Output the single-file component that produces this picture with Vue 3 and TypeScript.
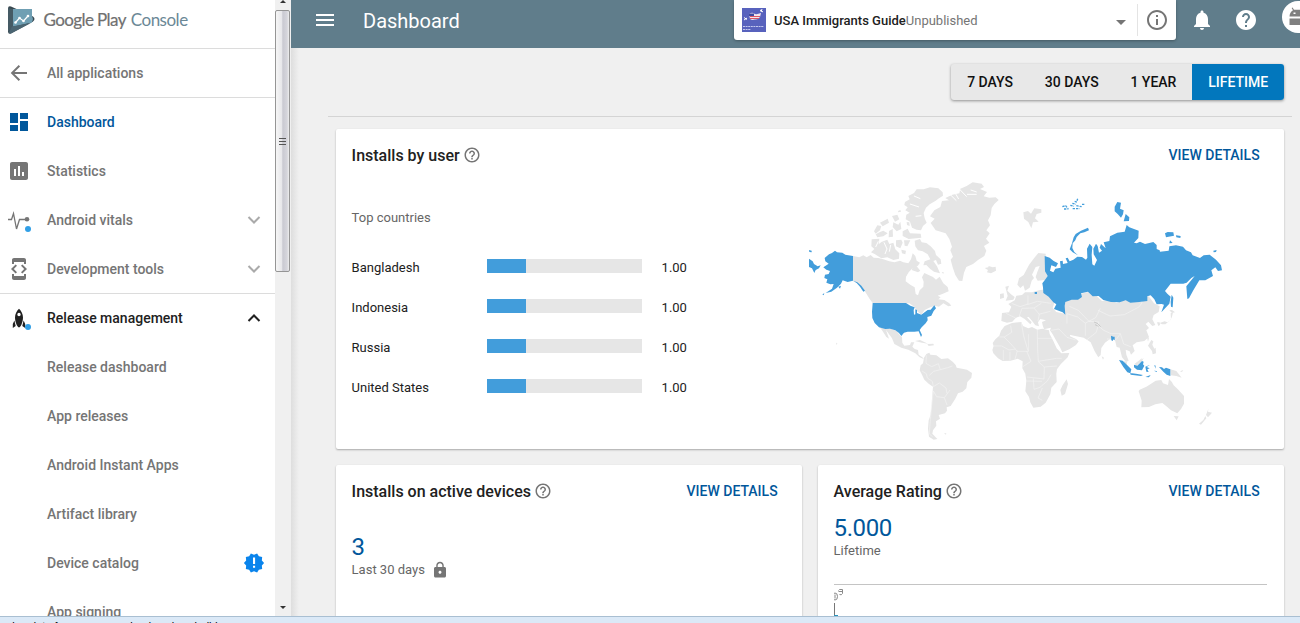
<script setup lang="ts">
interface NavItem {
  label: string
  icon?: string
  state?: 'active' | 'open'
  chevron?: 'up' | 'down'
  dot?: boolean
  badge?: boolean
  line?: boolean
}

const nav: NavItem[] = [
  { label: 'All applications', icon: 'back', line: true },
  { label: 'Dashboard', icon: 'dashboard', state: 'active' },
  { label: 'Statistics', icon: 'stats' },
  { label: 'Android vitals', icon: 'vitals', chevron: 'down', dot: true },
  { label: 'Development tools', icon: 'dev', chevron: 'down', line: true },
  { label: 'Release management', icon: 'rocket', state: 'open', chevron: 'up', dot: true },
  { label: 'Release dashboard' },
  { label: 'App releases' },
  { label: 'Android Instant Apps' },
  { label: 'Artifact library' },
  { label: 'Device catalog', badge: true },
  { label: 'App signing' },
]

const icons: Record<string, string> = {
  back: 'M20 11.1H7.5l5.6-5.6L11.7 4l-8 8 8 8 1.4-1.4-5.6-5.6H20z',
  dashboard: 'M3 13h8V3H3v10zm0 8h8v-6H3v6zm10 0h8V11h-8v10zm0-18v6h8V3h-8z',
  stats: 'M19 3H5c-1.1 0-2 .9-2 2v14c0 1.1.9 2 2 2h14c1.1 0 2-.9 2-2V5c0-1.1-.9-2-2-2zM9 17H7v-7h2v7zm4 0h-2V7h2v10zm4 0h-2v-4h2v4z',
  dev: 'M7 5h10v2h2V3c0-1.1-.9-2-2-2H7c-1.1 0-2 .9-2 2v4h2V5zm8.4 11.6L20 12l-4.6-4.6L14 8.8l3.2 3.2-3.2 3.2 1.4 1.4zM10 15.2L6.8 12 10 8.8 8.6 7.4 4 12l4.6 4.6 1.4-1.4zM17 19H7v-2H5v4c0 1.1.9 2 2 2h10c1.1 0 2-.9 2-2v-4h-2v2z',
  rocket: 'M12 2.8c-2.4 2.3-4 5.200-4 8.700 0 2.500.6 4.900 1.700 7.500l1.500 2.200h1.600l1.500-2.200c1.100-2.600 1.700-5 1.700-7.500 0-3.500-1.600-6.400-4-8.700zM12 6.800a1.700 1.700 0 1 1 0 3.400 1.700 1.700 0 0 1 0-3.400zM7.400 14.500L5.800 18v4l2.900-2.100zM16.600 14.500l1.600 3.500v4l-2.900-2.100z',
}

const help = 'M11 18h2v-2h-2v2zm1-16C6.480 2 2 6.480 2 12s4.480 10 10 10 10-4.480 10-10S17.520 2 12 2zm0 18c-4.410 0-8-3.590-8-8s3.590-8 8-8 8 3.590 8 8-3.590 8-8 8zm0-14c-2.210 0-4 1.790-4 4h2c0-1.100.9-2 2-2s2 .9 2 2c0 2-3 1.750-3 5h2c0-2.250 3-2.500 3-5 0-2.210-1.790-4-4-4z'

const ranges = ['7 DAYS', '30 DAYS', '1 YEAR', 'LIFETIME']
const selected = 'LIFETIME'

const countries = [
  { name: 'Bangladesh', value: 1 },
  { name: 'Indonesia', value: 1 },
  { name: 'Russia', value: 1 },
  { name: 'United States', value: 1 },
]
const total = countries.reduce((sum, c) => sum + c.value, 0)
</script>

<template>
  <div class="page">
    <div class="frame">
      <aside class="sidebar">
        <div class="brand">
          <svg width="28" height="30" viewBox="0 0 28 30">
            <path d="M1 3.500Q1 .5 4 1.500L26 11.500Q29 14 26 16.500L4 28.500Q1 29.500 1 26.500z" fill="#37474f" />
            <path d="M4.500 4H25v7l1 3-1 3.500L4.500 22z" fill="#6f9fb3" />
            <path d="M1 3v24L6 22V4z" fill="#455a64" />
            <path d="M5 21.500L24 18 4 28.500Q2 29 2 27z" fill="#4b6572" />
            <path d="M8.500 17.500l4-4.500 4 3 4.500-5" fill="none" stroke="#fff" stroke-width="1.200" />
            <g fill="#fff"><circle cx="8.500" cy="17.500" r="1.300" /><circle cx="12.500" cy="13" r="1.300" /><circle cx="16.500" cy="16" r="1.300" /><circle cx="21" cy="11" r="1.300" /></g>
          </svg>
          <span class="brand-name">Google Play</span>
          <span class="brand-sub">Console</span>
        </div>
        <nav>
          <div v-for="item in nav" :key="item.label" class="nav-item" :class="[item.state, { line: item.line }]">
            <span class="nav-icon">
              <svg v-if="item.icon === 'vitals'" width="24" height="24" viewBox="0 0 24 24">
                <path d="M1 11.500h3.500l2-6 3 15.500 3-9.500H19" fill="none" stroke="currentColor" stroke-width="1.300" />
                <circle cx="20" cy="11.300" r="2.300" fill="currentColor" />
              </svg>
              <svg v-else-if="item.icon" width="24" height="24" viewBox="0 0 24 24">
                <path :d="icons[item.icon]" fill="currentColor" fill-rule="evenodd" />
              </svg>
              <i v-if="item.dot" class="dot"></i>
            </span>
            <span class="nav-label">{{ item.label }}</span>
            <svg v-if="item.chevron" class="chevron" width="14" height="8" viewBox="0 0 14 8">
              <path :d="item.chevron === 'up' ? 'M1.500 7L7 1.500 12.500 7' : 'M1.500 1L7 6.500 12.500 1'" fill="none" stroke="currentColor" stroke-width="2" />
            </svg>
            <svg v-if="item.badge" class="badge" width="22" height="22" viewBox="0 0 24 24">
              <path fill="#0a84ec" d="M23 12l-2.440-2.780.34-3.680-3.610-.82-1.890-3.180L12 3 8.600 1.540 6.710 4.720l-3.610.81.34 3.680L1 12l2.440 2.780-.34 3.690 3.610.82 1.890 3.180L12 21l3.400 1.460 1.890-3.180 3.610-.82-.34-3.680z" />
              <path fill="#fff" d="M10.900 6h2.300v7h-2.300zM10.900 15h2.300v2.300h-2.300z" />
            </svg>
          </div>
        </nav>
      </aside>

      <div class="scrollbar">
        <div class="scroll-end"><i class="tri up"></i></div>
        <div class="thumb"><i></i><i></i><i></i></div>
        <div class="scroll-end bottom"><i class="tri down"></i></div>
      </div>

      <div class="main">
        <header class="topbar">
          <svg class="menu" width="18" height="12" viewBox="0 0 18 12"><path fill="#fff" d="M0 0h18v2H0zM0 5h18v2H0zM0 10h18v2H0z" /></svg>
          <h1>Dashboard</h1>
          <div class="app-picker">
            <svg width="24" height="24" viewBox="0 0 24 24">
              <path fill="#5862bd" d="M0 0h24v24H0z" />
              <path fill="#f4e8ee" d="M7 6q3-2 5-.5t7-.5l-1 4q-2 3-5 2.500-3 1-5-.5z" />
              <path stroke="#dc5867" d="M8 8.500h10M8 10.500h9" />
              <path fill="#3e4aa0" d="M7 5.500h5v2.500H7z" />
              <path stroke="#fff" d="M2 9.500l3 2M2 12l3-2M18 2l3 2M19 4l1-3" />
              <path stroke="#c3c7ee" stroke-dasharray="2 .6" d="M1 18.500h21M1 21.500h8" />
            </svg>
            <span class="app-name">USA Immigrants Guide</span><span class="app-state">Unpublished</span>
            <svg class="caret" width="10" height="5" viewBox="0 0 10 5"><path fill="#757575" d="M0 0h10L5 5z" /></svg>
            <span class="picker-info">
              <svg width="24" height="24" viewBox="0 0 24 24"><path fill="#757575" d="M11 17h2v-6h-2v6zm1-15C6.480 2 2 6.480 2 12s4.480 10 10 10 10-4.480 10-10S17.520 2 12 2zm0 18c-4.410 0-8-3.590-8-8s3.590-8 8-8 8 3.590 8 8-3.590 8-8 8zM11 9h2V7h-2v2z" /></svg>
            </span>
          </div>
          <svg class="bell" width="24" height="24" viewBox="0 0 24 24"><path fill="#fff" d="M12 22c1.100 0 2-.9 2-2h-4c0 1.100.89 2 2 2zm6-6v-5c0-3.070-1.640-5.640-4.500-6.320V4c0-.83-.67-1.500-1.500-1.500s-1.500.67-1.500 1.500v.68C7.630 5.360 6 7.920 6 11v5l-2 2v1h16v-1l-2-2z" /></svg>
          <svg class="support" width="24" height="24" viewBox="0 0 24 24"><path fill="#fff" d="M12 2C6.480 2 2 6.480 2 12s4.480 10 10 10 10-4.480 10-10S17.520 2 12 2zm1 17h-2v-2h2v2zm2.070-7.750l-.9.920C13.450 12.900 13 13.500 13 15h-2v-.5c0-1.100.45-2.100 1.170-2.830l1.240-1.260c.37-.36.59-.86.59-1.410 0-1.100-.9-2-2-2s-2 .9-2 2H8c0-2.210 1.790-4 4-4s4 1.790 4 4c0 .88-.36 1.680-.93 2.250z" /></svg>
          <svg class="avatar" width="32" height="32" viewBox="0 0 32 32">
            <circle cx="16" cy="16" r="16" fill="#fff" />
            <path fill="#808080" d="M7.500 15.500c0-3 1.500-5.200 3.500-6.300L9.600 7l1-.6L12 8.700h8l1.400-2.300 1 .6L21 9.200c2 1.100 3.500 3.300 3.500 6.300zM7.500 17.500h17V24h-17z" />
            <path fill="#fff" d="M11.500 11.500h2v1.500h-2zM18.500 11.500h2v1.500h-2z" />
          </svg>
        </header>

        <div class="content">
          <div class="range-row">
            <div class="ranges">
              <button v-for="r in ranges" :key="r" :class="{ on: r === selected }">{{ r }}</button>
            </div>
          </div>
          <div class="rule"></div>

          <section class="card wide">
            <div class="card-head">
              <h2>Installs by user</h2>
              <svg width="18" height="18" viewBox="0 0 24 24"><path :d="help" fill="#757575" /></svg>
              <a>VIEW DETAILS</a>
            </div>
            <div class="card-body">
              <div class="countries">
                <p>Top countries</p>
                <div v-for="c in countries" :key="c.name" class="country">
                  <span class="c-name">{{ c.name }}</span>
                  <span class="bar"><i :style="{ width: (c.value / total) * 100 + '%' }"></i></span>
                  <span class="c-value">{{ c.value.toFixed(2) }}</span>
                </div>
              </div>
              <svg class="map" width="430" height="264" viewBox="0 8 430 264">
                <!-- Canada, Greenland, Alaska -->
                <g transform="scale(.33333)">
                  <path class="land" d="M159 258L178 262 190 256 200 262 212 255 221 263 235 264 250 268 268 274 283 277 300 272 310 277 325 280 333 268 338 250 346 258 350 272 360 278 353 288 337 295 326 307 318 320 317 334 332 345 344 352 347 372 354 376 359 361 370 350 371 335 366 322 373 309 386 315 399 321 408 329 419 320 430 340 443 351 446 364 427 372 413 377 422 382 415 388 433 390 448 400 454 407 445 409 430 400 417 410 404 407 391 412 374 420 364 434 352 424 343 410 328 400 218 399 209 387 196 366 180 344 159 332z" />
                  <path class="land" d="M215 208L238 206 236 223 244 216 262 209 268 222 280 218 286 238 298 250 297 266 280 270 262 262 244 265 224 252 213 247 223 237 214 229zM222 184L232 166 244 168 240 181 227 191zM240 158L263 146 267 158 248 169zM240 186L250 182 263 190 250 199 232 202 227 193zM267 183L278 177 279 200 266 202zM280 157L295 164 301 155 304 177 290 184 278 171zM276 138L292 134 298 148 285 155zM308 184L323 176 330 190 362 191 364 203 326 207 308 198zM294 123L301 120 303 125 295 127zM288 211L304 209 308 218 301 235 288 229zM312 211L331 211 322 229 314 227zM304 239L318 242 316 253 306 250zM344 212L360 207 365 217 379 219 392 229 405 243 408 255 422 268 424 281 414 284 408 270 400 273 411 289 420 310 402 305 390 296 379 285 370 286 374 274 391 268 383 253 368 244 354 241 346 229zM340 285L350 289 361 302 354 307 335 300zM425 307L431 306 430 312z" />
                  <path class="land" d="M315 96L329 88 325 78 342 69 350 58 371 58 390 52 415 55 428 67 429 77 417 85 406 93 389 103 378 113 371 129 374 145 380 158 369 168 363 181 350 179 336 173 330 155 317 148 319 134 329 128 316 121 323 112 313 105zM320 156L328 157 329 168 321 165z" />
                  <path class="land" d="M426 93L447 91 436 84 457 74 478 70 481 56 500 48 518 37 545 41 552 51 540 57 561 66 551 79 568 83 587 82 596 90 583 102 575 114 572 136 564 151 570 166 559 181 569 190 558 206 568 218 552 228 559 242 553 258 534 270 519 282 499 291 492 308 487 333 477 332 466 315 458 292 452 269 459 260 451 241 456 230 448 207 437 190 407 181 392 159 404 146 390 139 403 121 421 111zM554 294L565 292 566 288 578 292 587 290 588 302 573 310 561 307 564 300zM600 372L611 370 612 383 600 387zM616 350L627 347 622 362 633 373 644 381 640 389 617 392 623 378z" />
                  <path class="creek" d="M342 78l19 8M330 102l27 9M347 139l17 -2M450 73l19 19M463 65l13 22M478 57l22 23M501 73l29 0M512 60l18 6M252 217l9 20-6 15M272 225l-4 20M374 254l14 12M235 214l-8 17" />
                  <path class="hit" d="M159 258L136 254 127 248 111 247 105 242 96 249 87 253 74 264 76 274 86 281 77 287 70 292 79 299 90 303 86 312 75 314 73 324 82 328 79 338 91 343 101 342 96 356 77 369 94 365 111 353 123 341 128 331 143 336 159 332 170 339 180 350 190 365 195 362 184 347 172 337 159 332zM27 266L38 274 42 282 53 289 62 286 57 295 47 300 43 309 36 295 27 291zM27 240L35 242 35 247 28 246zM67 373l6-3-2 6zM115 350l8-3-3 9z" />
                </g>
                <!-- United States and Latin America -->
                <g transform="translate(0 120) scale(.33333)">
                  <path class="land" d="M239 111L273 117 289 122 301 137 306 141 307 158 313 167 330 165 333 157 343 157 337 170 344 177 354 180 356 194 369 203 371 207 359 202 346 190 325 179 304 173 283 162 276 145 258 120 267 146 259 141 247 122zM345 153L360 150 384 161 366 158zM382 162L400 161 402 166 386 168zM372 203L379 192 388 188 391 194 409 196 424 207 444 205 458 215 467 225 470 233 486 236 501 239 516 249 514 263 502 276 499 295 488 305 474 310 466 326 452 348 440 352 441 362 435 370 416 375 420 386 408 394 409 407 399 421 397 431 412 447 401 449 387 440 384 416 386 391 391 377 395 350 396 325 399 290 387 282 373 269 366 254 359 241 362 226 369 220zM432 430l7 0-1 4zM108 158l4 2-2 5z" />
                  <path class="hit" d="M218 39H318L331 47 344 52 341 60 342 74 346 73 346 58 351 60 351 69 364 74 383 60 392 59 398 52 403 46 408 55 401 63 394 77 382 81 383 91 377 100 365 112 359 120 366 135 363 141 356 124 343 125 323 125 312 128 304 138 297 129 286 121 270 116 256 117 237 112 224 99 217 84 216 65z" />
                  <path class="border" d="M379 196l-1 24 17 10 20-9 6 18 22-6 14-5M366 243l13 8 3 13 15 10 3 16 18-11 20 15 3 16M400 303l10 17 23 3 17-23M400 303l-5 42-4 44-3 43 10 8M433 323l8 22M421 239l-20 5-13 12" />
                </g>
                <!-- Europe, Africa and Asia -->
                <g transform="translate(200 120) scale(.33333)">
                  <path class="land" d="M6 69L27 67 34 50 25 42 44 31 49 17 66 15 75 7 96 7 117 1 137 -2 151 16 164 35 158 54 169 66 196 72 197 90 211 129 210 139 228 147 236 154 228 165 208 178 187 187 180 172 168 151 158 133 150 121 153 113 132 118 128 106 126 96 138 91 121 87 114 97 117 109 106 106 97 94 86 81 81 82 95 97 91 103 74 87 60 79 47 84 37 95 21 98 4 93z" />
                  <path class="land" d="M14 108L36 99 64 96 69 108 85 115 96 111 112 119 127 116 147 121 149 132 160 153 170 175 184 190 208 189 203 202 182 223 171 238 169 251 170 276 154 293 151 313 137 338 122 350 100 353 91 337 87 321 76 304 79 272 76 251 67 235 68 214 53 206 32 212 8 213 -6 205 -20 190 -23 180 -19 168 -22 159 -14 148 -2 137 3 122zM200 268L204 282 195 312 185 317 181 300 188 285z" />
                  <path class="land" d="M171 71L194 72 192 48 198 31 224 26 246 21 240 12 268 5 289 17 306 33 330 31 350 39 373 31 401 33 426 37 432 23 446 19 462 40 479 49 476 66 461 75 457 88 466 105 457 108 445 95 437 102 447 114 439 121 447 141 433 153 410 157 398 166 404 183 393 194 389 184 377 179 379 194 386 212 378 216 366 202 359 173 350 171 345 151 329 148 315 158 304 174 302 195 295 202 284 184 272 157 263 151 251 143 222 137 209 134 198 119 191 103 177 94z" />
                  <path class="land" d="M416 304L419 299 439 290 452 282 467 272 484 270 489 280 504 285 507 267 515 275 521 286 535 299 552 318 552 341 543 357 532 370 513 361 501 350 487 339 466 343 447 351 424 352 425 332zM521 378L536 379 530 391zM625 357L624 365 636 368 624 382 618 375zM616 378L619 385 603 404 597 401 610 390zM511 238L529 243 545 263 529 258 512 256zM444 167l10-17 6 4-3 10 6 12 4-3 1 17-10 3-2-10zM441 141l6 2-3 12zM305 199l7 4-3 6zM371 213l10 4-1 10-7-7zM404 221l23-17-3 6 7-6-4 8-18 15zM471 97l8 0 1 8-5 3zM479 99l15-5 8 3 11-8-1-19 7-3-3 13-5 11-15 12-10 0zM508 61l8-1 9 7-9 2zM540 244l10-4-4 6zM569 250l9 6M630 285l9 3" />
                  <path class="border" d="M18 70l29 14M35 40l25 10 24-8 0-26M58 78l8-23 36-1 16 19-4 20M82 44l30-10 41 6M102 54l22-14M116 73l35-9M32 107l3 20-22 14-15 0M12 141l18 18 22 25 34 0 0-51M64 98l7 40 13 44M112 120l1 61M113 145h44M-19 168l24 0 22 12 20-3M10 180l0 31M30 185l0 26M52 182l-7 26M80 183l13 31-26 17M113 180l2 34 55-9 15 0M115 215l18 16-1 36-51-6M133 231l38-3M100 265l2 33 18-6 22-19 11-19M79 273l47 1M127 294l-13 30 13 7M153 121l24-4 24 25 26 8M201 101l0-30 32 10 23 19 0 37M208 49l27 12 32 33 30 2-8 31-28 22M255 100l32-17 14-28M294 61l36 17 43-4 44-23 10-14M291 104l20 17 22 10 28 0M321 147l28 1 12-17 10 31 21 8" />
                  <path d="M282 96l10 4 10 10M285 104l11 5" stroke="#aaa" fill="none" stroke-width="1.500" />
                  <path class="hit" d="M333 137l7 3 4 0 0 11-4-3-2 5-4-2z" />
                  <path class="hit" d="M357 210L368 212 382 226 394 238 391 250 382 247 370 231zM390 249L408 251 429 255 423 258 392 254zM402 224L412 227 426 213 431 215 429 223 433 227 426 241 411 239 402 232zM436 230L450 224 440 231 449 235 442 238 446 246 439 245zM477 231L486 232 492 237 498 233 511 238 511 258 500 254 490 245zM463 225l4 2-1 9zM462 242l9 1-1 3zM436 261l16-6-5 7zM430 257l9 1M499 254l4 3" />
                </g>
                <!-- Scandinavia, Svalbard and Russia -->
                <g transform="translate(210 0) scale(.33333)">
                  <path class="land" d="M107 251L85 249 72 265 57 285 41 315 27 325 22 344 31 354 40 346 45 362 59 353 65 332 72 324 66 314 77 291 89 288 82 306 77 321 83 332 104 330 113 319 105 302zM40 127L54 123 63 131 73 115 94 118 94 128 80 132 75 145 86 155 69 157 64 175 55 156 42 146z" />
                  <path class="hit" d="M104 258L119 263 131 273 144 280 138 291 124 286 120 302 130 307 136 296 152 293 150 274 158 272 159 282 173 279 167 265 173 263 179 274 190 269 202 260 216 261 228 269 232 263 231 236 239 221 247 231 245 254 247 283 253 287 261 270 251 253 250 236 258 221 263 228 267 248 276 242 269 233 273 222 287 235 281 217 298 213 300 199 322 188 344 185 350 165 358 172 372 177 386 182 385 204 372 218 380 220 390 215 405 222 421 218 430 216 440 225 440 237 449 241 450 245 476 242 478 229 498 226 519 230 528 241 543 247 548 256 570 264 581 256 599 254 618 269 633 286 636 301 624 303 616 292 604 301 609 318 586 331 568 331 550 361 537 385 532 387 529 349 554 318 544 324 530 338 520 341 482 341 465 363 472 371 482 380 478 401 454 427 462 404 455 402 440 403 433 388 422 376 412 379 412 393 388 396 361 398 347 391 329 397 303 396 280 390 266 378 248 379 234 365 213 370 216 381 204 389 185 389 166 396 164 408 166 434 158 427 132 417 139 403 130 397 116 380 100 369 99 352 97 340 104 331 113 318 105 304z" />
                  <path class="hit" d="M234 173L237 181 223 187 211 190 200 201 196 211 188 220 187 234 193 246 204 256 188 247 179 238 186 220 191 202 197 192 213 182zM314 110L322 96 333 98 330 116 341 121 339 133 333 143 323 132 314 124zM347 132L358 142 357 153 341 154zM465 190L473 186 490 187 492 197 468 202zM498 196l14 2-1 6-12-2zM480 211l8 8-10 1zM610 242l10-2-2 6-7 1zM485 374l5 9-2 29-5-2-1-15zM74 366h7v6h-7zM362 151l5 3M406 211l7 4M151 262l7 5M569 366l3 2" />
                  <path d="M157 110l10-3 8 11M162 117h10M181 106l11 3M187 100l11 3M194 94l9 3M199 107l16 3M188 116l21 0M201 92l2-6M216 103h8" fill="none" stroke="#449fdc" stroke-width="4" stroke-dasharray="7 3" />
                </g>
              </svg>
            </div>
          </section>

          <div class="card-row">
            <section class="card">
              <div class="card-head">
                <h2>Installs on active devices</h2>
                <svg width="18" height="18" viewBox="0 0 24 24"><path :d="help" fill="#757575" /></svg>
                <a>VIEW DETAILS</a>
              </div>
              <div class="metric low">
                <strong>3</strong>
                <span class="caption">
                  Last 30 days
                  <svg width="18" height="18" viewBox="0 0 24 24"><path fill="#757575" d="M18 8h-1V6c0-2.760-2.240-5-5-5S7 3.240 7 6v2H6c-1.100 0-2 .9-2 2v10c0 1.100.9 2 2 2h12c1.100 0 2-.9 2-2V10c0-1.100-.9-2-2-2zm-6 9c-1.100 0-2-.9-2-2s.9-2 2-2 2 .9 2 2-.9 2-2 2zm3.100-9H8.900V6c0-1.710 1.390-3.100 3.100-3.100s3.100 1.390 3.100 3.100v2z" /></svg>
                </span>
              </div>
            </section>
            <section class="card">
              <div class="card-head">
                <h2>Average Rating</h2>
                <svg width="18" height="18" viewBox="0 0 24 24"><path :d="help" fill="#757575" /></svg>
                <a>VIEW DETAILS</a>
              </div>
              <div class="metric">
                <strong>5.000</strong>
                <span class="caption">Lifetime</span>
              </div>
              <div class="chart">
                <svg width="12" height="32" viewBox="0 0 12 32">
                  <g fill="none" stroke="#8a8a8a"><path d="M4.500 5.500l1-1h3v4q-1 2-3 1M4.500 6.500h4" /><ellipse cx="1" cy="11.500" rx="2.500" ry="3.500" /><path d="M1 9.500v4" /></g>
                  <path d="M.5 18v14" stroke="#777" />
                  <path d="M0 30h4v2H0z" fill="#2a94bd" />
                </svg>
              </div>
            </section>
          </div>
        </div>
      </div>
    </div>
    <div class="statusbar"><span>Transferring data from www.googleadservices.build</span></div>
  </div>
</template>

<style>
body {
  margin: 0;
  overflow: hidden;
}
</style>

<style scoped>
.page {
  display: flex;
  flex-direction: column;
  height: 623px;
  overflow: hidden;
  font-family: Roboto, "Liberation Sans", sans-serif;
  color: #212121;
  background: #f0f0f0;
}
.page svg {
  display: block;
  flex: none;
}
.frame {
  display: flex;
  height: 616px;
  overflow: hidden;
}

/* Navigation */
.sidebar {
  width: 275px;
  flex: none;
  background: #fff;
}
.brand {
  display: flex;
  align-items: center;
  box-sizing: border-box;
  height: 49px;
  padding: 0 0 9px 7px;
  border-bottom: 1px solid #dcdcdc;
  font-family: Lato, sans-serif;
  font-size: 17px;
}
.brand-name {
  margin-left: 8.5px;
  color: #707070;
  letter-spacing: -0.6px;
  -webkit-text-stroke: 0.2px #707070;
}
.brand-sub {
  margin-left: 5px;
  color: #6b8896;
  letter-spacing: -0.5px;
}
.nav-item {
  display: flex;
  align-items: center;
  box-sizing: border-box;
  height: 49px;
  padding: 0 14px 0 7px;
  border-bottom: 1px solid transparent;
  color: #757575;
  font-size: 14px;
  font-weight: 500;
}
.nav-item.line {
  border-bottom-color: #dcdcdc;
}
.nav-item.active {
  color: #01579b;
}
.nav-item.open {
  color: #212121;
}
.nav-icon {
  position: relative;
  width: 24px;
  height: 24px;
  margin-right: 16px;
}
.dot {
  position: absolute;
  left: 18px;
  top: 18px;
  width: 6px;
  height: 6px;
  border-radius: 50%;
  background: #319fe6;
}
.nav-label {
  flex: 1;
  white-space: nowrap;
}
.chevron {
  color: #aaa;
}
.open .chevron {
  color: #212121;
}
.badge {
  margin-right: -4px;
}

/* Scrollbar */
.scrollbar {
  display: flex;
  flex-direction: column;
  width: 16px;
  flex: none;
  background: #f0f0f0;
}
.scroll-end {
  display: flex;
  justify-content: center;
  height: 10px;
}
.scroll-end.bottom {
  align-items: flex-end;
  margin-top: auto;
  padding-bottom: 7px;
}
.tri {
  width: 0;
  height: 0;
  border: 3px solid transparent;
}
.tri.up {
  margin-top: -3px;
  border-bottom-color: #333;
}
.tri.down {
  border-top-color: #333;
  border-bottom: 0;
}
.thumb {
  display: flex;
  flex-direction: column;
  align-items: center;
  justify-content: center;
  gap: 2px;
  box-sizing: border-box;
  width: 15px;
  height: 262px;
  padding-right: 1px;
  border: 1px solid #959595;
  border-radius: 2px;
  background: linear-gradient(90deg, #f6f6f6, #e7e7ea 45%, #c9c9d1 52%, #d6d6dc 85%, #eee);
}
.thumb i {
  width: 7px;
  height: 1px;
  background: #555;
}

/* Top bar */
.main {
  flex: 1;
  min-width: 0;
  display: flex;
  flex-direction: column;
  overflow: hidden;
}
.topbar {
  display: flex;
  box-sizing: border-box;
  height: 48px;
  flex: none;
  background: #607d8b;
}
.menu {
  margin: 14px 0 0 25px;
}
h1 {
  flex: 1;
  margin: 0 0 0 29px;
  color: #fff;
  font-size: 20px;
  font-weight: 400;
  line-height: 42px;
}
.app-picker {
  display: flex;
  align-items: center;
  box-sizing: border-box;
  width: 442px;
  height: 40px;
  padding-left: 8px;
  border-radius: 0 0 3px 3px;
  background: #fff;
  box-shadow: 0 1px 3px rgba(0, 0, 0, 0.3);
  font-size: 13px;
}
.app-name {
  margin-left: 8px;
  font-weight: 500;
}
.app-state {
  color: #757575;
}
.caret {
  margin: 4px 11px 0 auto;
}
.picker-info {
  display: flex;
  align-items: center;
  height: 32px;
  padding: 0 7px;
  border-left: 1px solid #e4e4e4;
}
.bell {
  margin: 8px 0 0 14px;
}
.support {
  margin: 8px 0 0 20px;
}
.avatar {
  margin: 1px -14px 0 24px;
}

/* Dashboard body */
.content {
  flex: 1;
  padding: 16px 8px 0 37px;
  background: linear-gradient(90deg, #dedede, #f0f0f0 8px);
}
.range-row {
  display: flex;
  justify-content: flex-end;
  padding-right: 8px;
}
.ranges {
  display: flex;
  height: 36px;
  border-radius: 3px;
  background: #e8e8e8;
  box-shadow: 0 1px 3px rgba(0, 0, 0, 0.4);
}
button {
  padding: 0 15.9px;
  border: 0;
  background: none;
  color: #111;
  font: 500 14px Roboto, sans-serif;
}
button.on {
  border-radius: 0 3px 3px 0;
  background: #0277bd;
  color: #fff;
}
.rule {
  height: 1px;
  margin: 16px 0 12px;
  background: #d4d4d4;
}
.card {
  box-sizing: border-box;
  background: #fff;
  border-radius: 2px;
  box-shadow: 0 1px 2px rgba(0, 0, 0, 0.3);
}
.wide {
  height: 320px;
  margin: 0 8px;
}
.card-head {
  display: flex;
  align-items: center;
  box-sizing: border-box;
  height: 49px;
  padding: 3px 24.4px 0 15.6px;
}
h2 {
  margin: 0 3px 0 0;
  font-size: 16px;
  font-weight: 500;
}
.card-head a {
  margin-left: auto;
  color: #01579b;
  font-size: 14px;
  font-weight: 500;
}
.card-body {
  display: flex;
}
.countries {
  width: 448.4px;
  padding-left: 15.6px;
  font-size: 13px;
}
.countries p {
  margin: 31px 0 20px;
  color: #666;
  line-height: 18px;
}
.country {
  display: flex;
  align-items: center;
  height: 40px;
}
.c-name {
  width: 135.4px;
}
.bar {
  width: 155px;
  height: 14px;
  margin: -3px 19.600px 0 0;
  background: #e6e6e6;
}
.bar i {
  display: block;
  height: 100%;
  background: #429ddb;
}

/* World map */
.land {
  fill: #e5e5e5;
}
.hit {
  fill: #429ddb;
}
.creek {
  fill: none;
  stroke: #fff;
  stroke-width: 3;
}
.border {
  fill: none;
  stroke: #f3f3f3;
  stroke-width: 2;
}

.card-row {
  display: flex;
  gap: 16px;
  margin: 16px 8px 0;
}
.card-row .card {
  flex: 1;
  height: 220px;
}
.metric {
  display: flex;
  flex-direction: column;
  padding-left: 15.6px;
}
.metric.low {
  padding-top: 19px;
}
strong {
  color: #01579b;
  font-size: 24px;
  font-weight: 400;
  letter-spacing: -0.4px;
  line-height: 28px;
}
.caption {
  display: flex;
  align-items: center;
  gap: 6px;
  color: #666;
  font-size: 13px;
  line-height: 18px;
}
.chart {
  margin: 24px 17px 0 16px;
  border-top: 1px solid #c4c4c4;
}

.statusbar {
  box-sizing: border-box;
  height: 7px;
  overflow: hidden;
  border-top: 1px solid #a9bfd2;
  background: #dbe9f7;
  color: #000;
  font-family: "Liberation Sans", sans-serif;
  font-size: 11px;
  line-height: 14px;
}
.statusbar span {
  display: block;
  padding-top: 2px;
  white-space: nowrap;
  text-indent: -32px;
}
</style>
